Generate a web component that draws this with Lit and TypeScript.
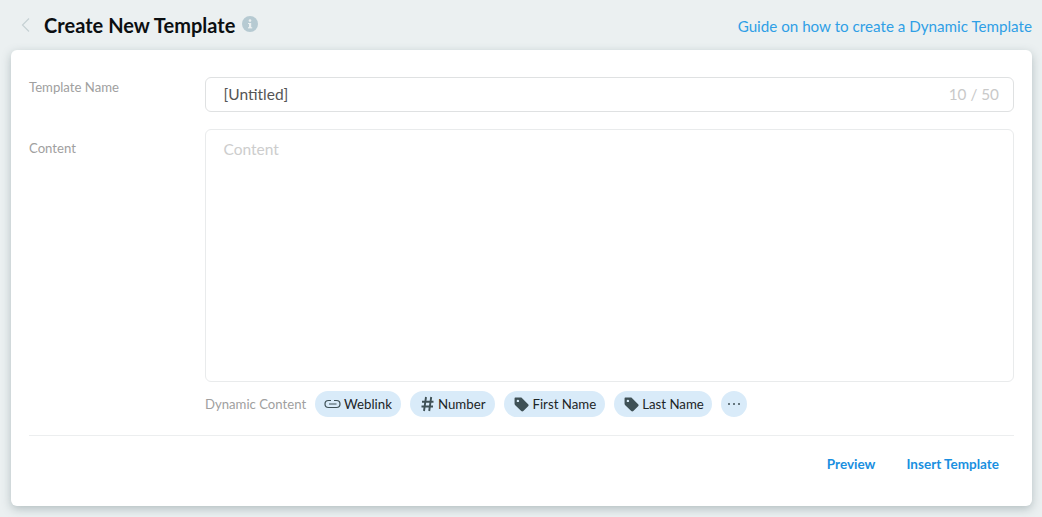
import { LitElement, html, css } from "lit";
import { customElement } from "lit/decorators.js";

const tag = html`<svg class="ic" width="15" height="15" viewBox="1.500 1.500 13.500 13.500"><path fill="#3f5156" d="M2 2.600C2 2.300 2.300 2 2.600 2H7.600c.4 0 .7.1 1 .4l5.600 5.600c.6.6.6 1.300 0 1.900l-4.300 4.200c-.6.6-1.300.6-1.900 0L2.400 8.600C2.100 8.300 2 8 2 7.600Z"/><circle cx="5" cy="5" r="1.100" fill="#d9ebf9"/></svg>`;

@customElement("app-root")
export class AppRoot extends LitElement {
  static styles = css`
    :host { display: block; width: 1042px; height: 517px; background: #ebf0f1; font-family: Lato, sans-serif; overflow: hidden; box-sizing: border-box; padding: 0 10px 0 11px; }
    .head { height: 50px; display: flex; align-items: center; }
    .back { margin: 0 0 1px 9px; display: block; }
    h1 { margin: 0 0 0 12px; font-size: 20px; letter-spacing: 0.03px; font-weight: 700; color: #0b0f11; line-height: 50px; }
    .info { margin: 0 0 2px 7px; display: block; }
    .guide { margin: 2px 0 0 auto; font-size: 15.2px; color: #2f9fe6; text-decoration: none; }
    .card { background: #fff; height: 456px; border-radius: 6px; box-shadow: 0 3px 10px rgba(90,110,115,.38); padding: 27px 18px 0; box-sizing: border-box; }
    .row { display: grid; grid-template-columns: 176px 1fr; }
    .lab { font-size: 13.15px; color: #a0a0a0; line-height: 20px; }
    .input { height: 35px; box-sizing: border-box; border: 1px solid #dfe1e2; border-radius: 6px; display: flex; align-items: center; justify-content: space-between; padding: 0 14px 2px 17.5px; font-size: 15.5px; color: #555; }
    .count { font-size: 15.3px; color: #c9c9c9; }
    .row2 { margin-top: 17px; }
    .area { height: 253px; box-sizing: border-box; border: 1px solid #e9ebec; border-radius: 6px; padding: 9px 17.5px; font-size: 15.5px; line-height: 20px; color: #cdcdcd; }
    .lab2 { margin-top: 9px; }
    .dyn { margin: 9px 0 0 176px; display: flex; align-items: center; }
    .dl { font-size: 13.15px; color: #a0a0a0; margin-right: 9px; }
    .chip { height: 26px; border-radius: 13px; background: #d9ebf9; display: flex; align-items: center; font-size: 13.25px; color: #1c2527; margin-right: 9px; box-sizing: border-box; padding: 0 9px; }
    .ic { display: block; flex: none; }
    .tagged { padding-left: 10px; }
    .tagged span { margin-left: 3px; }
    .tagged.last { padding-right: 8px; }
    .link .ic, .num .ic { margin-right: 3px; }
    .num { padding: 0 10px; }
    .more { width: 26px; padding: 0; justify-content: center; }
    .div { height: 1px; background: #eceeef; margin-top: 18px; }
    .acts { display: flex; justify-content: flex-end; margin-top: 19px; padding-right: 15px; gap: 31px; }
    .acts a { font-size: 13.5px; font-weight: 700; color: #1a8fe0; line-height: 18px; }
  `;

  render() {
    return html`
      <div class="head">
        <svg class="back" width="12" height="14" viewBox="0 0 12 14"><path d="M9 .5 2.500 7 9 13.500" fill="none" stroke="#c6d1d4" stroke-width="1.200"/></svg>
        <h1>Create New Template</h1>
        <svg class="info" width="16" height="16" viewBox="0 0 16 16"><circle cx="8" cy="8" r="8" fill="#b6cad2"/><rect x="7" y="7" width="2.200" height="5" fill="#ebf0f1"/><rect x="6" y="11.200" width="4.200" height="1.200" fill="#ebf0f1"/><rect x="6" y="7" width="2" height="1" fill="#ebf0f1"/><circle cx="8" cy="4.600" r="1.300" fill="#ebf0f1"/></svg>
        <a class="guide">Guide on how to create a Dynamic Template</a>
      </div>
      <div class="card">
        <div class="row">
          <div class="lab">Template Name</div>
          <div class="input"><span>[Untitled]</span><span class="count">10 / 50</span></div>
        </div>
        <div class="row row2">
          <div class="lab lab2">Content</div>
          <div class="area">Content</div>
        </div>
        <div class="dyn">
          <span class="dl">Dynamic Content</span>
          <div class="chip link">
            <svg class="ic" width="17" height="16" viewBox="0 0 17 16"><path d="M7 4.500H4.500a3.500 3.500 0 0 0 0 7H12.500a3.500 3.500 0 0 0 0-7H10M5 8h7.500" fill="none" stroke="#3f5156" stroke-width="1.200"/></svg>
            Weblink
          </div>
          <div class="chip num">
            <svg class="ic" width="15" height="16" viewBox="0 0 15 16"><path d="M6 1 4 15M11.200 1 9.200 15M2 5.700h11.500M1.500 10.500h11.500" fill="none" stroke="#3f5156" stroke-width="1.900"/></svg>
            Number
          </div>
          <div class="chip tagged">${tag}<span>First Name</span></div>
          <div class="chip tagged last">${tag}<span>Last Name</span></div>
          <div class="chip more"><svg class="ic" width="14" height="4" viewBox="0 0 14 4"><circle cx="2" cy="2" r="1" fill="#3f5156"/><circle cx="7" cy="2" r="1" fill="#3f5156"/><circle cx="12" cy="2" r="1" fill="#3f5156"/></svg></div>
        </div>
        <div class="div"></div>
        <div class="acts"><a>Preview</a><a>Insert Template</a></div>
      </div>
    `;
  }
}
